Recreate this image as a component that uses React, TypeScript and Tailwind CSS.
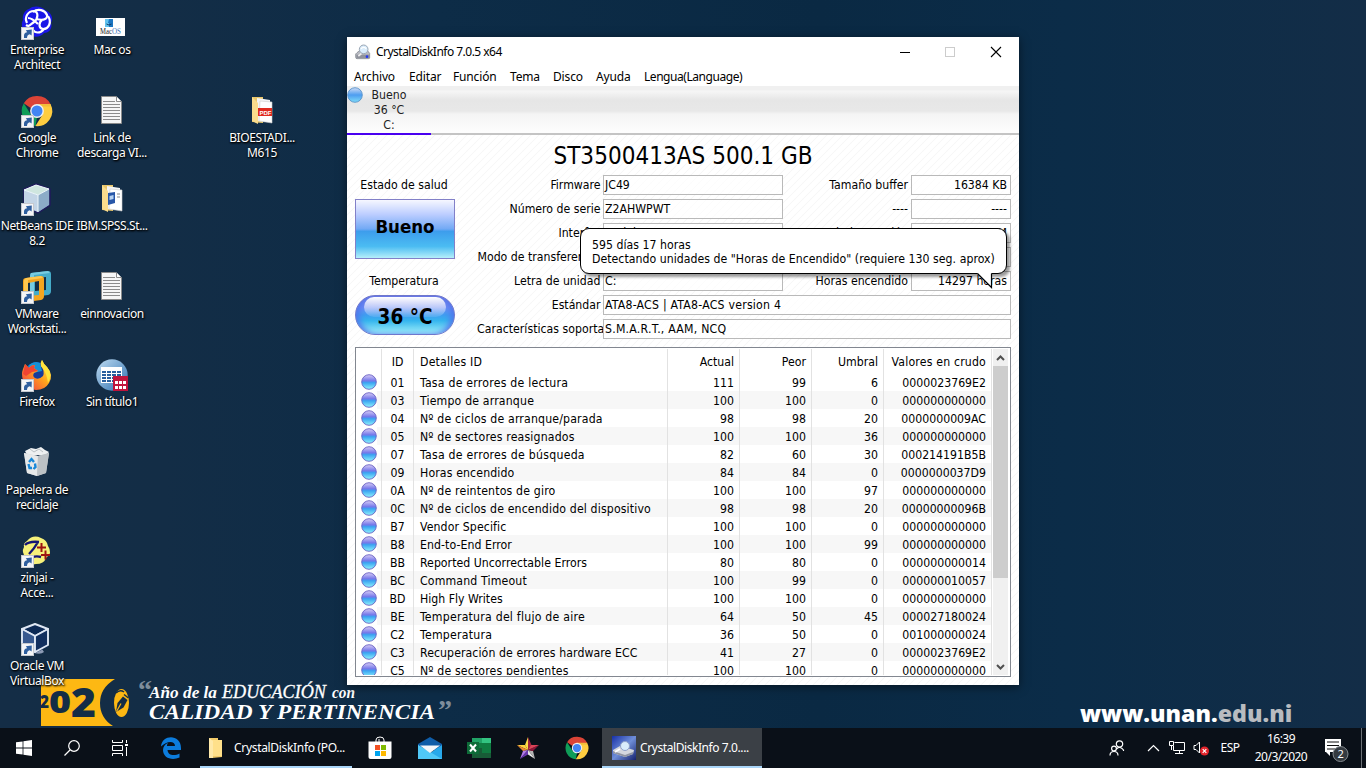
import React from 'react';

const desk = "font-['Noto_Sans','Open_Sans',sans-serif]";
const app = "font-['DejaVu_Sans_Condensed','DejaVu_Sans',sans-serif] [font-stretch:condensed]";

function Shortcut() {
  return (
    <g>
      <rect x="0.5" y="20.5" width="12" height="12" fill="#f4f5f7" stroke="#c6c9ce" />
      <path d="M3 31V28.5C3 26.5 4.2 25.4 6.2 25.2L4.8 23.2L10.8 22.6L10.6 28.6L8.8 27.2C6.8 27.8 6 29 6 31Z" fill="#2f5f9f" />
    </g>
  );
}

function EnterpriseArchitect() {
  return (
    <svg viewBox="0 0 32 34" className="h-[34px] w-8 overflow-visible">
      <path d="M8 2C12-2 21-1 24 3C30 5 33 11 30 16C32 21 28 26 23 26C19 31 11 31 8 26C2 25-1 18 2 13C1 8 4 3 8 2Z" fill="#1a16e8" />
      <g fill="none" stroke="#fff" strokeWidth="2.2">
        <path d="M6 16C3 10 7 4 13 4C18 5 17 12 13 15C9 18 8 20 5 18" />
        <path d="M12 5C17 1 24 3 26 8C27 14 19 13 15 12" />
        <path d="M27 9C31 15 28 22 22 22C17 21 18 15 21 13" />
        <path d="M23 22C19 27 14 26 12 23" />
        <path d="M7 11C11 11 14 14 17 17" />
      </g>
      <Shortcut />
    </svg>
  );
}

function ChromeMark() {
  return (
    <g>
      <path d="M16 1A15 15 0 0 1 29.6 9.3H16L9.6 13L2.8 8.3A15 15 0 0 1 16 1Z" fill="#db4437" />
      <path d="M2.8 8.3L10 19.8L16 22.6L14.5 31A15 15 0 0 1 2.8 8.3Z" fill="#0f9d58" />
      <path d="M29.6 9.3A15 15 0 0 1 14.4 31L22 19L20.5 9.3Z" fill="#ffcd40" />
      <path d="M16 9H29.6L29 11.500H20Z" fill="#f3bd3a" />
      <circle cx="16" cy="16" r="6.9" fill="#f1f1f1" />
      <circle cx="16" cy="16" r="5.5" fill="#4285f4" />
    </g>
  );
}

function Chrome() {
  return (
    <svg viewBox="0 0 32 34" className="h-[34px] w-8 overflow-visible"><ChromeMark /><Shortcut /></svg>
  );
}

function NetBeans() {
  return (
    <svg viewBox="0 0 32 34" className="h-[34px] w-8 overflow-visible">
      <path d="M15 1L29 6V22L17 30L3 24V6Z" fill="#6d8fb0" stroke="#201a5c" strokeWidth="1.5" />
      <path d="M15 2L28 6L17 12L3 7Z" fill="#cfe6df" />
      <path d="M3 7L17 12V29L3 23Z" fill="#c3d5e6" />
      <path d="M17 12L28 6V22L17 29Z" fill="#8cacc8" />
      <path d="M15 2L28 6L17 12L3 7Z M17 12V29" fill="none" stroke="#eef7fb" />
      <Shortcut />
    </svg>
  );
}

function VMware() {
  return (
    <svg viewBox="0 0 32 34" className="h-[34px] w-8 overflow-visible">
      <path d="M10 2L27 0Q30 0 30 3V20Q30 23 27 24L12 26Q9 26 9 23V5Q9 2 10 2ZM14 7V20L25 19V6Z" fillRule="evenodd" fill="#45acc9" />
      <path d="M10 2L27 0L29 2L13 4V22L9 23V5Z" fill="#78cbe0" />
      <path d="M5 7L20 5Q23 5 23 8V25Q23 28 20 29L5 31Q2 31 2 28V10Q2 7 5 7ZM7 12V25L18 24V10Z" fillRule="evenodd" fill="#f5a51f" />
      <path d="M5 7L20 5L22 7L7 9V26L3 28V9Z" fill="#ffc74f" />
      <Shortcut />
    </svg>
  );
}

function Firefox() {
  return (
    <svg viewBox="0 0 32 34" className="h-[34px] w-8 overflow-visible">
      <defs>
        <linearGradient id="fx" x1="1" y1="0" x2="0" y2="1"><stop offset="0" stopColor="#fff14f" /><stop offset=".45" stopColor="#ffa51c" /><stop offset="1" stopColor="#f0304e" /></linearGradient>
      </defs>
      <circle cx="16" cy="15" r="12" fill="#143b9b" />
      <path d="M7 7Q13 1 19 4L21 12L12 14Z" fill="#1690d5" />
      <path d="M4 5L8 9Q10 6 14 6L13 9L17 12L13 14Q11 17 14 19Q18 21 22 17Q24 12 20 7Q19 4 21 1Q23 6 26 8Q33 16 28 24Q24 31 15 31Q5 30 2 21Q0 15 2 10Z" fill="url(#fx)" />
      <path d="M4 5L8 9Q10 6 14 6L13 9L17 12L11 13L5 17L2 15Z" fill="#f04432" />
      <path d="M20 7Q19 4 21 1Q23 6 26 8Q32 15 27 24Q26 14 20 7Z" fill="#ffe43b" />
      <Shortcut />
    </svg>
  );
}

function RecycleBin() {
  return (
    <svg viewBox="0 0 32 34" className="h-[34px] w-8">
      <path d="M4 4L10 1L15 2L20 0L24 3L28 5L25 8H6Z" fill="#eef0f1" />
      <path d="M9 2L13 5L18 2L22 5" fill="none" stroke="#b9bfc3" />
      <path d="M3 6L17 9L28 6L25 26L16 29L6 26Z" fill="#cfd3d6" />
      <path d="M3 6L17 9L16 29L6 26Z" fill="#e6e8e9" />
      <path d="M17 9L28 6L25 26L16 29Z" fill="#bcc1c5" />
      <g fill="none" stroke="#1787d8" strokeWidth="2.4"><path d="M8 15L10.5 12L13 15" /><path d="M7.5 17L8.5 21H11" /><path d="M14 16.5L14.5 20L12.5 22" /></g>
    </svg>
  );
}

function Zinjai() {
  return (
    <svg viewBox="0 0 32 34" className="h-[34px] w-8 overflow-visible">
      <path d="M6 6Q12-1 20 3Q26 5 27 11Q32 18 25 23Q23 29 15 29Q7 31 5 23Q0 17 3 12Q2 8 6 6Z" fill="#f6f17a" />
      <path d="M4 10Q8 6 18 7M17 7Q13 14 8 19" fill="none" stroke="#151575" strokeWidth="2.400" />
      <path d="M11 22.500Q15 20.500 20 22" fill="none" stroke="#151575" strokeWidth="2.400" />
      <path d="M20.500 8V17M16 12.500H25M24.500 15.500V24.500M20 20H29" stroke="#9e1412" strokeWidth="2" />
      <Shortcut />
    </svg>
  );
}

function VirtualBox() {
  return (
    <svg viewBox="0 0 32 34" className="h-[34px] w-8 overflow-visible">
      <path d="M9 25L19 23L23 29Q20 32 13 30Z" fill="#8d9bb5" />
      <path d="M14 1L27 5V24L14 30L1 23V6Z" fill="#16325f" />
      <g stroke="#dfe7f4" strokeWidth="1.9" strokeLinejoin="round"><path d="M14 1L27 6L14 13L1 6Z" fill="#0d2a55" /><path d="M14 13V29L1 22V6Z" fill="#38598f" /><path d="M14 13L27 6V22L14 29Z" fill="#122f5e" /></g>
      <Shortcut />
    </svg>
  );
}

function MacOs() {
  return (
    <svg viewBox="0 0 32 34" className="h-[34px] w-8 overflow-visible">
      <rect x="0" y="11" width="29" height="18" fill="#fff" />
      <rect x="9" y="12" width="8" height="8" fill="#62c3ee" /><path d="M13 12L12 16H13V20H17V12Z" fill="#1c76c2" />
      <path d="M10.500 17Q13 19 15.500 17" fill="none" stroke="#123c63" />
      <text x="4" y="27" fontSize="7.5" fontFamily="Liberation Serif" fill="#222" textLength="12" lengthAdjust="spacingAndGlyphs">Mac</text>
      <text x="16" y="27" fontSize="7.5" fontFamily="Liberation Serif" fill="#3a72b8" textLength="9" lengthAdjust="spacingAndGlyphs">OS</text>
    </svg>
  );
}

function TextFile() {
  return (
    <svg viewBox="1 -1 32 34" className="h-[34px] w-8">
      <path d="M6.5 .5H21L26.5 6V27.5H6.5Z" fill="#f6f6f6" stroke="#8a8a8a" />
      <path d="M21.5 .5V5.500H26.5" fill="#fff" stroke="#8a8a8a" />
      <path d="M8 5.500H20M8 8.500H25M8 11.500H25M8 14.500H25M8 17.500H25M8 20.500H25M8 23.500H25" stroke="#8b8b8b" />
    </svg>
  );
}

function PictureFolder({ pdf }: { pdf?: boolean }) {
  return (
    <svg viewBox="0 0 32 34" className="h-[34px] w-8">
      <path d="M6 2H17V28L6 27Z" fill="#e9c66b" />
      <path d="M11 3L24 5V27L11 26Z" fill="#f5f5f5" />
      <path d="M14 6L26 7V28L13 26Z" fill="#fff" stroke="#ccc" strokeWidth=".6" />
      {pdf ? (
        <g><path d="M12 13H26V21H12Z" fill="#e02b20" /><text x="13.500" y="19.500" fontSize="6" fontWeight="bold" fontFamily="Liberation Sans" fill="#fff">PDF</text></g>
      ) : (
        <g><path d="M12 10L19 9V20L12 22Z" fill="#2857a8" /><path d="M13.500 13L17.500 12V16L13.500 17Z" fill="#b8d3f2" /><path d="M21 11H24M21 14H24" stroke="#888" /></g>
      )}
      <path d="M6 2L12 8V29L6 26Z" fill="#fbdc8c" />
    </svg>
  );
}

function SpssFile() {
  return (
    <svg viewBox="1 0 32 34" className="h-[34px] w-8 overflow-visible">
      <defs><linearGradient id="sp" x1="0" y1="0" x2="1" y2="1"><stop offset="0" stopColor="#bfdcf2" /><stop offset="1" stopColor="#2d6fae" /></linearGradient></defs>
      <circle cx="17" cy="16" r="15.7" fill="url(#sp)" />
      <rect x="6" y="8" width="21" height="16" fill="#fff" />
      <path d="M7 13H26M7 16H26M7 19H26M7 22H26" stroke="#285f9e" strokeWidth="1.800" strokeDasharray="4 1" />
      <rect x="18" y="17" width="15" height="15" fill="#c0143c" />
      <path d="M20 22H23V25H20ZM24 22H27V25H24ZM28 22H31V25H28ZM20 27H23V30H20ZM24 27H27V30H24ZM28 27H31V30H28Z" fill="#fff" />
    </svg>
  );
}

function DeskItem({ place, label, children }: { place: string; label: string[]; children: React.ReactNode }) {
  return (
    <div className={`${place} flex flex-col items-center pt-[7px]`}>
      <div className="h-[35px] w-8">{children}</div>
      <div className="pl-px text-center text-[12px] leading-[15px] tracking-[-0.4px] whitespace-nowrap text-white [text-shadow:1px_1px_2px_#000,0_1px_2px_#000]">
        {label.map((l) => <div key={l}>{l}</div>)}
      </div>
    </div>
  );
}

function Logo() {
  return (
    <svg viewBox="0 0 420 52" className="absolute left-[40px] top-[676px] h-[52px] w-[420px]">
      <path d="M1 3H75Q60 12 60 27Q60 42 73 50H1Z" fill="#fdb813" />
      <g fill="#142d46" fontFamily="Open Sans" fontWeight="800">
        <text x="0" y="32" fontSize="17" textLength="9" lengthAdjust="spacingAndGlyphs">2</text>
        <text x="9" y="37" fontSize="30" textLength="22" lengthAdjust="spacingAndGlyphs">0</text>
        <text x="31" y="41" fontSize="40" textLength="25" lengthAdjust="spacingAndGlyphs">2</text>
      </g>
      <ellipse cx="81.500" cy="27" rx="7.500" ry="14" fill="#fdb813" />
      <path d="M76 17Q80 13 84 16" fill="none" stroke="#142d46" strokeWidth="1.500" />
      <path d="M76 36L77.500 27L83 20.500L87.500 24L83.500 31.500Z" fill="#142d46" />
      <path d="M76.500 35.500L81 27.500" stroke="#fdb813" strokeWidth="1.200" />
      <path d="M84 18.500L88.500 22" stroke="#142d46" strokeWidth="1.500" />
      <g fontFamily="Liberation Serif" fill="#fff" fontStyle="italic">
        <text x="109" y="22" fontSize="16" fontWeight="bold" textLength="68" lengthAdjust="spacingAndGlyphs">Año de la</text>
        <text x="182" y="22" fontSize="19" textLength="104" lengthAdjust="spacingAndGlyphs" stroke="#fff" strokeWidth=".3">EDUCACIÓN</text>
        <text x="292" y="22" fontSize="16" fontWeight="bold" textLength="23" lengthAdjust="spacingAndGlyphs">con</text>
        <text x="109" y="43" fontSize="22" fontWeight="bold" textLength="286" lengthAdjust="spacingAndGlyphs">CALIDAD Y PERTINENCIA</text>
      </g>
      <g fontFamily="Liberation Serif" fontWeight="bold" fontSize="28" fill="#7e8d9b"><text x="98" y="23" textLength="14" lengthAdjust="spacingAndGlyphs">“</text><text x="398" y="43" textLength="14" lengthAdjust="spacingAndGlyphs">”</text></g>
    </svg>
  );
}

function DriveIcon({ cls, blue }: { cls: string; blue?: boolean }) {
  return (
    <svg viewBox="0 0 24 24" className={cls}>
      {blue && <><defs><linearGradient id="db" x1="0" y1="0" x2="1" y2="1"><stop offset="0" stopColor="#1730a8" /><stop offset=".5" stopColor="#6f8ed8" /><stop offset="1" stopColor="#15216e" /></linearGradient></defs><rect width="24" height="24" fill="url(#db)" /></>}
      {blue ? (
        <g>
          <path d="M1 14L8 10L22 14L21 18L13 21L1 17Z" fill="#d4d7df" />
          <path d="M1 15L13 19L21 16V18L13 21L1 17Z" fill="#8f94a3" />
          <path d="M8 13L3 16" stroke="#fff" strokeWidth="2" />
          <circle cx="13" cy="10" r="4.500" fill="#d9ecfb" stroke="#8fa0c8" />
        </g>
      ) : (
        <g>
          <path d="M3 13L8 9H18L22 14V21Q22 22 20 22H3Q1 22 1 20V15Z" fill="#b8bac2" stroke="#777b84" />
          <path d="M2 16H22V21H2Z" fill="#8f929c" />
          <path d="M10 14L5 18" stroke="#eee" strokeWidth="2.500" />
          <circle cx="13" cy="8" r="6.500" fill="#d9ecfb" stroke="#9aa6b4" strokeWidth="1.500" />
          <path d="M9 7Q13 3 17 7" fill="none" stroke="#fff" strokeWidth="2" />
          <circle cx="18" cy="19" r="2" fill="#2438f0" />
        </g>
      )}
    </svg>
  );
}

function Orb({ cls, pale }: { cls: string; pale?: boolean }) {
  return (
    <svg viewBox="0 0 16 16" className={cls}>
      <defs>
        <linearGradient id="orb" x1="0" y1="0" x2="0" y2="1"><stop offset="0" stopColor="#d9ccf5" /><stop offset=".42" stopColor="#7377ea" /><stop offset=".55" stopColor="#3aa4f2" /><stop offset="1" stopColor="#8ff4fb" /></linearGradient>
        <linearGradient id="orb2" x1="0" y1="0" x2="0" y2="1"><stop offset="0" stopColor="#cfdcf5" /><stop offset=".5" stopColor="#4d9df0" /><stop offset="1" stopColor="#7fdcf8" /></linearGradient>
      </defs>
      <circle cx="8" cy="8" r="7.300" fill={pale ? 'url(#orb2)' : 'url(#orb)'} stroke={pale ? '#5b93c9' : '#6a62c4'} strokeWidth=".9" />
    </svg>
  );
}

const rows: string[][] = [
  ['01', 'Tasa de errores de lectura', '111', '99', '6', '0000023769E2', 'tracking-[0.23px]'],
  ['03', 'Tiempo de arranque', '100', '100', '0', '000000000000', 'tracking-[0.17px]'],
  ['04', 'Nº de ciclos de arranque/parada', '98', '98', '20', '0000000009AC', 'tracking-[0.17px]'],
  ['05', 'Nº de sectores reasignados', '100', '100', '36', '000000000000', 'tracking-[0.17px]'],
  ['07', 'Tasa de errores de búsqueda', '82', '60', '30', '000214191B5B', 'tracking-[0.26px]'],
  ['09', 'Horas encendido', '84', '84', '0', '0000000037D9', 'tracking-[0.13px]'],
  ['0A', 'Nº de reintentos de giro', '100', '100', '97', '000000000000', 'tracking-[0.17px]'],
  ['0C', 'Nº de ciclos de encendido del dispositivo', '98', '98', '20', '00000000096B', 'tracking-[0.15px]'],
  ['B7', 'Vendor Specific', '100', '100', '0', '000000000000', 'tracking-[0.12px]'],
  ['B8', 'End-to-End Error', '100', '100', '99', '000000000000', 'tracking-[0.06px]'],
  ['BB', 'Reported Uncorrectable Errors', '80', '80', '0', '000000000014', 'tracking-[0.03px]'],
  ['BC', 'Command Timeout', '100', '99', '0', '000000010057', 'tracking-[0.15px]'],
  ['BD', 'High Fly Writes', '100', '100', '0', '000000000000', 'tracking-normal'],
  ['BE', 'Temperatura del flujo de aire', '64', '50', '45', '000027180024', 'tracking-[0.23px]'],
  ['C2', 'Temperatura', '36', '50', '0', '001000000024', 'tracking-[0.26px]'],
  ['C3', 'Recuperación de errores hardware ECC', '41', '27', '0', '0000023769E2', 'tracking-[0.08px]'],
  ['C5', 'Nº de sectores pendientes', '100', '100', '0', '000000000000', 'tracking-[0.15px]'],
];

function Row({ cells, shade, head }: { cells: string[]; shade?: boolean; head?: boolean }) {
  const line = 'border-r border-[#e2e2e2]';
  return (
    <div className={`flex shrink-0 ${head ? 'h-[24px] leading-[26px]' : 'h-[18px] leading-[20px]'} ${shade ? 'bg-[linear-gradient(90deg,#fff_21px,#f7f7f7_21px)]' : ''}`}>
      <div className={`w-[26px] pl-[5px] pt-px ${line}`}>{!head && <Orb cls="h-4 w-4" />}</div>
      <div className={`w-8 text-center ${line}`}>{cells[0]}</div>
      <div className={`w-[254px] pl-[6px] whitespace-nowrap ${cells[6]} ${line}`}>{cells[1]}</div>
      <div className={`w-[72px] pr-[5px] text-right ${line}`}>{cells[2]}</div>
      <div className={`w-[72px] pr-[5px] text-right ${line}`}>{cells[3]}</div>
      <div className={`w-[72px] pr-[5px] text-right ${line}`}>{cells[4]}</div>
      <div className={`w-[108px] pr-[5px] text-right whitespace-nowrap ${head ? 'tracking-[0.18px]' : ''} ${line}`}>{cells[5]}</div>
    </div>
  );
}

function Field({ label, value, right, l2, v2, clip }: { label: string; value: string; right?: boolean; l2?: string; v2?: string; clip?: boolean }) {
  const box = 'h-5 border border-[#b9b9b9] bg-white/60 overflow-hidden whitespace-nowrap';
  return (
    <div className="flex h-5 leading-[18px] whitespace-nowrap">
      <div className={`flex pt-px ${clip ? 'w-[126px] overflow-hidden tracking-[0.02px]' : 'mr-[2.5px] w-[123.5px] justify-end'}`}><span className={clip ? '' : 'max-w-full'}>{label}</span></div>
      <div className={`${box} ${right ? 'w-[180px]' : 'w-[408px] tracking-[0.23px]'} pl-[1px]`}>{value}</div>
      {right && <><div className="mr-[3px] w-[125px] pt-px text-right">{l2}</div><div className={`${box} w-[100px] pr-[3px] text-right`}>{v2}</div></>}
    </div>
  );
}

function CrystalWindow() {
  return (
    <div className="absolute left-[347px] top-[37px] flex h-[648px] w-[672px] flex-col bg-white text-black shadow-[0_2px_9px_rgba(0,0,0,0.5)]">
      <div className="flex h-[29px] items-center pl-2">
        <DriveIcon cls="h-4 w-4" />
        <span className="ml-[5px] text-[12px] tracking-[-0.52px]">CrystalDiskInfo 7.0.5 x64</span>
        <svg viewBox="0 0 110 14" className="ml-auto mr-[16px] h-[14px] w-[110px]">
          <path d="M7 7.500H17" stroke="#000" /><rect x="52.500" y="2.500" width="9" height="9" fill="none" stroke="#ccc" /><path d="M98 2L108 12M108 2L98 12" stroke="#000" strokeWidth="1.100" />
        </svg>
      </div>
      <div className="flex h-5 items-center pl-[7px] pt-[2px] text-[12px] tracking-[-0.15px] whitespace-nowrap">
        <span className="w-[55px]">Archivo</span><span className="w-[44px]">Editar</span><span className="w-[57px]">Función</span><span className="w-[43px]">Tema</span><span className="w-[43px]">Disco</span><span className="w-[48px]">Ayuda</span><span className="tracking-[-0.45px]">Lengua(Language)</span>
      </div>
      <div className="h-[47px] bg-[linear-gradient(180deg,#f0f0f0_0,#f0f0f0_4px,#f6f6f6_5px,#e6e6e6_14px,#e8e8e8_25px,#f4f4f4_28px,#fdfdfd_46px)]">
        <div className={`flex ${app}`}>
          <Orb pale cls="h-4 w-4 mt-px" />
          <div className="w-[52px] pt-[2px] text-center text-[12.2px] leading-[15px] text-[#222]">Bueno<br />36 °C<br />C:</div>
        </div>
      </div>
      <div className="flex h-[2px] shrink-0 bg-[#c4c4c4]"><div className="w-[84px] bg-[#4a00f0]" /></div>
      <div className={`flex min-h-0 flex-1 flex-col bg-[length:8px_8px] bg-[linear-gradient(135deg,#f7f7f7_0,#fff_8%,#fff_43%,#f7f7f7_50%,#fff_57%,#fff_92%,#f7f7f7_100%)] px-2 text-[12.2px] ${app}`}>
        <div className="h-[40px] text-center text-[24px] leading-[42px] tracking-[0.03px]">ST3500413AS 500.1 GB</div>
        <div className="flex h-[172px]">
          <div className="flex w-[98px] shrink-0 flex-col items-center">
            <div className="h-[24px] leading-[20px]">Estado de salud</div>
            <div className="ml-[2px] h-[60px] w-[100px] border border-[#8280c8] bg-[linear-gradient(180deg,#f6f7ff_0,#bccdff_25%,#72a9f5_50%,#3d9dec_54%,#4bbcf2_80%,#b5effa_100%)] text-center text-[18.5px] font-bold leading-[53px]">Bueno</div>
            <div className="mt-[12px] h-[24px] leading-[20px]">Temperatura</div>
            <div className="ml-[2px] flex h-10 w-[100px] justify-center rounded-full border border-[#6f77cc] bg-[linear-gradient(180deg,#7b7be0_0,#6d8cf5_30%,#3f9df0_50%,#35b5ee_65%,#a5f3fa_100%)] shadow-[inset_5px_0_6px_-2px_#5276ec,inset_-5px_0_6px_-2px_#5276ec]">
              <div className="mt-[1px] h-5 w-[82px] rounded-[10px] bg-[linear-gradient(180deg,#fff,rgba(255,255,255,0.1))] text-center text-[20.5px] font-bold leading-[40px] whitespace-nowrap">36 °C</div>
            </div>
          </div>
          <div className="flex flex-1 flex-col gap-1 pl-[24px]">
            <Field label="Firmware" value="JC49" right l2="Tamaño buffer" v2="16384 KB" />
            <Field label="Número de serie" value="Z2AHWPWT" right l2="----" v2="----" />
            <Field label="Interfaz" value="Serial ATA" right l2="Vel. de rotación" v2="7200 RPM" />
            <Field label="Modo de transferencia" value="SATA/300" right l2="Nº de encendidos" v2="2411 veces" />
            <Field label="Letra de unidad" value="C:" right l2="Horas encendido" v2="14297 horas" />
            <Field label="Estándar" value="ATA8-ACS | ATA8-ACS version 4" />
            <Field clip label="Características soportadas" value="S.M.A.R.T., AAM, NCQ" />
          </div>
        </div>
        <div className="flex h-[330px] w-[656px] shrink-0 border border-[#828790] bg-white">
          <div className="mb-px flex w-[636px] flex-col overflow-hidden pt-[1px]">
            <Row head cells={['ID', 'Detalles ID', 'Actual', 'Peor', 'Umbral', 'Valores en crudo', 'tracking-[0.2px]']} />
            {rows.map((r, i) => <Row key={r[0]} cells={r} shade={i % 2 === 1} />)}
          </div>
          <div className="ml-[1px] mt-px mb-px flex w-[15px] flex-col bg-[#f0f0f0]">
            <svg viewBox="0 0 15 17" className="h-[17px] w-[15px]"><path d="M4 11L7.500 7.500L11 11" fill="none" stroke="#505050" strokeWidth="2" /></svg>
            <div className="h-[212px] bg-[#cdcdcd]" />
            <svg viewBox="0 0 15 17" className="mt-auto h-[17px] w-[15px]"><path d="M4 7L7.500 10.500L11 7" fill="none" stroke="#505050" strokeWidth="2" /></svg>
          </div>
        </div>
      </div>
    </div>
  );
}

function Tooltip() {
  return (
    <div className={`absolute left-[580px] top-[228px] h-[46px] w-[427px] rounded-[9px] border border-black bg-white pl-[11px] pt-[9px] text-[12.2px] leading-[14px] tracking-[0.03px] whitespace-nowrap text-black shadow-[3px_3px_3px_rgba(0,0,0,0.4)] ${app}`}>
      <div>595 días 17 horas</div>
      <div>Detectando unidades de "Horas de Encendido" (requiere 130 seg. aprox)</div>
      <svg viewBox="0 0 17 17" className="absolute left-[395px] top-[43px] h-[17px] w-[17px]"><path d="M2 0H15.500V15.500L1.500 1.500" fill="#fff" /><path d="M1.500 1.500L15.500 15.500V1.500" fill="none" stroke="#000" strokeWidth="1.200" /></svg>
    </div>
  );
}

function Slot({ children, cls = 'w-12' }: { children: React.ReactNode; cls?: string }) {
  return <div className={`flex h-10 shrink-0 items-center justify-center ${cls}`}>{children}</div>;
}

function Taskbar() {
  return (
    <div className="absolute bottom-0 left-0 flex h-10 w-full bg-[#0a1018] text-[12px] text-white">
      <Slot><svg viewBox="0 0 16 16" className="h-4 w-4" fill="#fff"><path d="M0 2.300L6.600 1.400V7.600H0ZM7.400 1.300L16 0V7.600H7.400ZM0 8.400H6.600V14.600L0 13.700ZM7.400 8.400H16V16L7.400 14.700Z" /></svg></Slot>
      <Slot><svg viewBox="0 0 16 16" className="h-4 w-4" fill="none" stroke="#fff" strokeWidth="1.200"><circle cx="10" cy="6" r="5.300" /><path d="M6 10L.5 15.500" /></svg></Slot>
      <Slot><svg viewBox="0 0 17 16" className="h-4 w-[17px]" fill="none" stroke="#fff"><path d="M.5 0V2.500H10.500V0M.5 16V13.500H10.500V16M.5 5.500H10.500V10.500H.5ZM14.500 0V3M14.500 7V16" /><path d="M13 4H16V6H13Z" fill="#fff" stroke="none" /></svg></Slot>
      <Slot cls="ml-[3px] w-12"><svg viewBox="0 0 20 22" className="h-[22px] w-5"><path d="M0 9.500C1-3 20-3 20 11V13H6.500C7 19 14 19 18.500 16.500V20.500C11 24 2 21 2 13C2 10 4 7 7 6C6 7.500 6 8 6 9H14C14 3 5 4 0 9.500Z" fill="#0c7cdc" /></svg></Slot>
      <div className="ml-[5px] flex h-10 w-[152px] items-center border-b-2 border-[#a9d5f8] pl-[9px] pt-px">
        <svg viewBox="0 0 14 20" className="h-5 w-[14px]"><path d="M0 0H9V14L13 13V19L3 20H0Z" fill="#f1ca69" /><path d="M3 2H13V18H3Z" fill="#ffe08a" /><path d="M0 0L4 3V20H0Z" fill="#ffe9a9" /></svg>
        <span className="ml-[11px] tracking-[-0.32px] whitespace-nowrap">CrystalDiskInfo (PO...</span>
      </div>
      <Slot cls="ml-1 w-12"><svg viewBox="0 0 24 24" className="h-6 w-6"><path d="M8 6V4Q8 1 12 1Q16 1 16 4V6M11 6V3" fill="none" stroke="#fff" /><path d="M.5 5.500H23.500V21Q23.500 23 21.500 23H2.500Q.5 23 .5 21Z" fill="#fff" /><path d="M7 9H12V14H7Z" fill="#f25022" /><path d="M13 9H18V14H13Z" fill="#7fba00" /><path d="M7 15H12V20H7Z" fill="#00a4ef" /><path d="M13 15H18V20H13Z" fill="#ffb900" /></svg></Slot>
      <Slot cls="ml-[2px] w-12"><svg viewBox="0 0 24 24" className="h-6 w-6"><path d="M0 8L12 1L24 8V14H0Z" fill="#0f5da8" /><path d="M0 9L12 17L24 9V23H0Z" fill="#28a8ea" /><path d="M0 9L24 23H0Z" fill="#50c8f7" /><path d="M2 9.500H22L12 17Z" fill="#f4f7fa" /></svg></Slot>
      <Slot cls="ml-px w-12"><svg viewBox="0 0 24 24" className="h-6 w-6"><path d="M5 2H24V22H5Z" fill="#21a366" /><path d="M5 7H24V12H5Z" fill="#107c41" /><path d="M5 12H24V22H5Z" fill="#185c37" /><path d="M15 2H24V7H15Z" fill="#33c481" /><path d="M15 12H24V17H15Z" fill="#107c41" /><rect y="6" width="12" height="12" fill="#0d6b38" /><path d="M3 8.500L9 15.500M9 8.500L3 15.500" stroke="#fff" strokeWidth="2" /></svg></Slot>
      <Slot cls="ml-px w-12"><svg viewBox="0 0 24 24" className="h-6 w-6"><path d="M12 1L12 14L9 9Z" fill="#ffde47" /><path d="M12 1L15.500 9L12 14Z" fill="#a3253f" /><path d="M1 9L9 9L12 14Z" fill="#ffd23e" /><path d="M1 9L7 15L12 14Z" fill="#f08a33" /><path d="M7 15L4 23L12 14Z" fill="#b07bea" /><path d="M4 23L12 18.500V14Z" fill="#6a35b0" /><path d="M12 14V18.500L19 23Z" fill="#e9e9e9" /><path d="M12 14L19 23L17 15Z" fill="#b5b5b5" /><path d="M12 14L17 15L23 9Z" fill="#8e1538" /><path d="M12 14L15 9L23 9Z" fill="#dc4458" /></svg></Slot>
      <Slot cls="ml-px w-12"><svg viewBox="0 0 32 32" className="h-6 w-6"><ChromeMark /></svg></Slot>
      <div className="ml-px flex h-10 w-[160px] items-center border-b-2 border-[#a9d5f8] bg-[#3b4046] pl-[10px] pt-px">
        <DriveIcon blue cls="h-6 w-6" /><span className="ml-1 tracking-[-0.42px] whitespace-nowrap">CrystalDiskInfo 7.0....</span>
      </div>
      <div className="ml-auto flex items-center">
        <Slot cls="w-[32px] mr-2"><svg viewBox="0 0 16 16" className="h-4 w-4" fill="none" stroke="#fff" strokeWidth="1.200"><circle cx="10.500" cy="4" r="3.200" /><path d="M7.500 9Q11 5.500 14.500 10V11" /><circle cx="5" cy="8.500" r="2.400" /><path d="M1 15.500Q1 11.500 5 11.500Q9 11.500 9 15.500" /></svg></Slot>
        <Slot cls="w-6"><svg viewBox="0 0 13 8" className="h-2 w-[13px]" fill="none" stroke="#fff" strokeWidth="1.200"><path d="M1 7L6.500 1.500L12 7" /></svg></Slot>
        <Slot cls="w-6"><svg viewBox="0 0 16 14" className="h-[14px] w-4" fill="none" stroke="#fff"><path d="M5.500 1.500H15.500V9.500H4.500V5M10.500 10V12.500M6 12.500H14M.5 .5H4.500V4.500H.5ZM2.500 4V9" /></svg></Slot>
        <Slot cls="w-6"><svg viewBox="0 0 16 16" className="h-4 w-4"><path d="M1 5.500H3L6.500 2V13L3 9.500H1Z" fill="none" stroke="#fff" /><circle cx="11.500" cy="11" r="4.500" fill="#e2242b" /><path d="M9.700 9.200L13.300 12.800M13.300 9.200L9.700 12.800" stroke="#fff" strokeWidth="1.200" /></svg></Slot>
        <Slot cls="w-[34px]"><span className="tracking-[-0.5px]">ESP</span></Slot>
        <div className="w-[68px] text-center leading-[18px] tracking-[-0.5px]">16:39<br />20/3/2020</div>
        <Slot cls="w-[46px] pr-[2px]"><svg viewBox="0 0 26 26" className="mt-[3px] h-[26px] w-[26px]"><path d="M1 2H17V15H6V19L2 15H1Z" fill="#fff" /><path d="M3 5H15M3 8.500H15M3 12H11" stroke="#111" /><circle cx="16.500" cy="17" r="7.500" fill="#343a40" stroke="#858b90" /><text x="13.500" y="21" fill="#fff" fontFamily="Noto Sans" fontSize="11">2</text></svg></Slot>
        <div className="mr-1 h-10 w-px bg-[#6b7075]" />
      </div>
    </div>
  );
}

export default function App() {
  return (
    <div className={`relative h-[768px] w-[1366px] overflow-hidden bg-[linear-gradient(90deg,#142d46_0%,#132d46_12%,#0d2c47_32%,#0a2943_60%,#0b2c48_78%,#132d47_100%)] ${desk}`}>
      <Logo />
      <div className="relative grid w-[300px] grid-flow-col grid-cols-[73px_75px_75px_75px] grid-rows-[repeat(8,88px)]">
        <DeskItem place="col-start-1 row-start-1" label={['Enterprise', 'Architect']}><EnterpriseArchitect /></DeskItem>
        <DeskItem place="col-start-1 row-start-2" label={['Google', 'Chrome']}><Chrome /></DeskItem>
        <DeskItem place="col-start-1 row-start-3" label={['NetBeans IDE', '8.2']}><NetBeans /></DeskItem>
        <DeskItem place="col-start-1 row-start-4" label={['VMware', 'Workstati...']}><VMware /></DeskItem>
        <DeskItem place="col-start-1 row-start-5" label={['Firefox']}><Firefox /></DeskItem>
        <DeskItem place="col-start-1 row-start-6" label={['Papelera de', 'reciclaje']}><RecycleBin /></DeskItem>
        <DeskItem place="col-start-1 row-start-7" label={['zinjai -', 'Acce...']}><Zinjai /></DeskItem>
        <DeskItem place="col-start-1 row-start-8" label={['Oracle VM', 'VirtualBox']}><VirtualBox /></DeskItem>
        <DeskItem place="col-start-2 row-start-1 ml-[2px]" label={['Mac os']}><MacOs /></DeskItem>
        <DeskItem place="col-start-2 row-start-2 ml-[2px]" label={['Link de', 'descarga VI...']}><TextFile /></DeskItem>
        <DeskItem place="col-start-2 row-start-3 ml-[2px]" label={['IBM.SPSS.St...']}><PictureFolder /></DeskItem>
        <DeskItem place="col-start-2 row-start-4 ml-[2px]" label={['einnovacion']}><TextFile /></DeskItem>
        <DeskItem place="col-start-2 row-start-5 ml-[2px]" label={['Sin título1']}><SpssFile /></DeskItem>
        <DeskItem place="col-start-4 row-start-2 ml-[2px]" label={['BIOESTADI...', 'M615']}><PictureFolder pdf /></DeskItem>
      </div>
      <div className="absolute left-[1080px] top-[700px] text-[23.2px] font-extrabold leading-[26px] text-white font-['Open_Sans',sans-serif]">www.unan.<span className="text-[#b9bcc0]">edu.ni</span></div>
      <CrystalWindow />
      <Tooltip />
      <Taskbar />
    </div>
  );
}
